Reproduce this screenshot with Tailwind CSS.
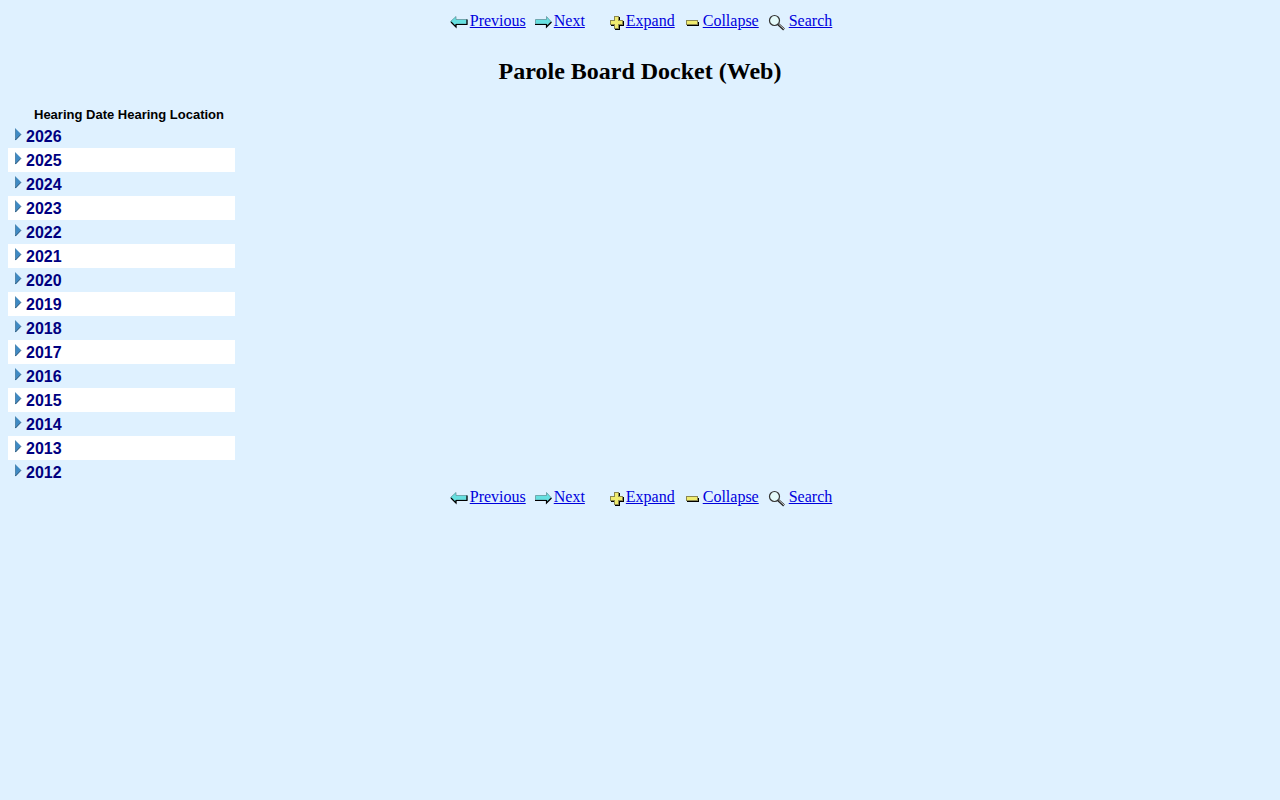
<!DOCTYPE html>
<html lang="en">
<head>
<meta charset="utf-8">
<title>Parole Board Docket (Web)</title>
<script src="https://cdn.jsdelivr.net/npm/@tailwindcss/browser@4"></script>
</head>
<body class="min-h-screen bg-[#dff1ff] px-2 pt-2 font-['Liberation_Serif',serif] text-base text-black">
<svg class="hidden" aria-hidden="true">
  <symbol id="prev" viewBox="0 0 20 14">
    <path d="M0.500 6.500 6 1.500V4.500H17V9H6V12Z" fill="#66e0e0" stroke="#5a8c94" stroke-width=".7"/>
    <path d="M1 7 6 12V9.500H17V4.500" fill="none" stroke="#000" stroke-width="1.200"/>
  </symbol>
  <symbol id="next" viewBox="0 0 20 14">
    <path d="M1.500 4.500H12.500V1.500L17 6.500 12.500 11.500V9H1.500Z" fill="#66e0e0" stroke="#5a8c94" stroke-width=".7"/>
    <path d="M1 9.500H12.500V12L17.500 7" fill="none" stroke="#000" stroke-width="1.200"/>
  </symbol>
  <symbol id="plus" viewBox="0 0 16 16">
    <path d="M5 1H10V5H14V10H10V14H5V10H1V5H5Z" fill="#000"/>
    <path d="M4 0H9V4H13V9H9V13H4V9H0V4H4Z" fill="#8a8750"/>
    <path d="M5 1H8V5H12V8H8V12H5V8H1V5H5Z" fill="#f0ec70"/>
  </symbol>
  <symbol id="minus" viewBox="0 0 18 16">
    <path d="M2 6H14V10H2Z" fill="#000"/>
    <path d="M1 4H13V9H1Z" fill="#8a8750"/>
    <path d="M2 5H12V8H2Z" fill="#f0ec70"/>
  </symbol>
  <symbol id="search" viewBox="0 0 22 18">
    <circle cx="7.500" cy="6.500" r="5" fill="#e4fafa" stroke="#333" stroke-width="1.200"/>
    <path d="M11 10 17 15.500" stroke="#222" stroke-width="2.400"/>
    <path d="M11.500 10 17 15" stroke="#ccc" stroke-width="1"/>
  </symbol>
  <symbol id="tri" viewBox="0 0 7 13">
    <path d="M0 0 6 6 0 12.500Z" fill="#3f8ac4"/>
    <path d="M.5 1V12" stroke="#5487ab"/>
    <path d="M.5 12 6 6.300" stroke="#17476f" fill="none"/>
  </symbol>
</svg>

<nav aria-label="Top" class="flex h-6 justify-center pl-0.5 leading-[26px] text-[#0000dd]">
  <a href="#" class="mr-2 flex"><svg class="mt-[7px] h-3.5 w-5"><use href="#prev"/></svg><span class="underline">Previous</span></a>
  <a href="#" class="mr-[25px] flex"><svg class="mt-[7px] h-3.5 w-5"><use href="#next"/></svg><span class="underline">Next</span></a>
  <a href="#" class="mr-2.5 flex"><svg class="mt-2 h-4 w-4"><use href="#plus"/></svg><span class="underline">Expand</span></a>
  <a href="#" class="mr-2 flex"><svg class="mt-2 h-4 w-[18px]"><use href="#minus"/></svg><span class="underline">Collapse</span></a>
  <a href="#" class="flex"><svg class="mt-1.5 h-[18px] w-[22px]"><use href="#search"/></svg><span class="underline">Search</span></a>
</nav>

<h1 class="mt-6 text-center text-2xl leading-[30px] font-bold">Parole Board Docket (Web)</h1>

<table class="mt-5 w-[227px] border-collapse font-['Liberation_Sans',sans-serif] font-bold">
  <thead><tr><th class="h-[18px] py-0 pl-[26px] text-left text-[13px] leading-[18px] whitespace-nowrap">Hearing Date Hearing Location</th></tr></thead>
  <tbody id="years" class="text-[#000080]"></tbody>
</table>

<nav aria-label="Bottom" class="flex h-6 justify-center pl-0.5 leading-[26px] text-[#0000dd]">
  <a href="#" class="mr-2 flex"><svg class="mt-[7px] h-3.5 w-5"><use href="#prev"/></svg><span class="underline">Previous</span></a>
  <a href="#" class="mr-[25px] flex"><svg class="mt-[7px] h-3.5 w-5"><use href="#next"/></svg><span class="underline">Next</span></a>
  <a href="#" class="mr-2.5 flex"><svg class="mt-2 h-4 w-4"><use href="#plus"/></svg><span class="underline">Expand</span></a>
  <a href="#" class="mr-2 flex"><svg class="mt-2 h-4 w-[18px]"><use href="#minus"/></svg><span class="underline">Collapse</span></a>
  <a href="#" class="flex"><svg class="mt-1.5 h-[18px] w-[22px]"><use href="#search"/></svg><span class="underline">Search</span></a>
</nav>
<script>
  const body = document.getElementById('years');
  for (let y = 2026; y >= 2012; y--) {
    body.insertAdjacentHTML('beforeend', `<tr class="even:bg-white"><td class="h-6 p-0"><a href="#" class="flex h-6 pl-[7px] leading-[26px]"><svg class="mt-1 mr-1 h-[13px] w-[7px]"><use href="#tri"/></svg>${y}</a></td></tr>`);
  }
</script>
</body>
</html>
